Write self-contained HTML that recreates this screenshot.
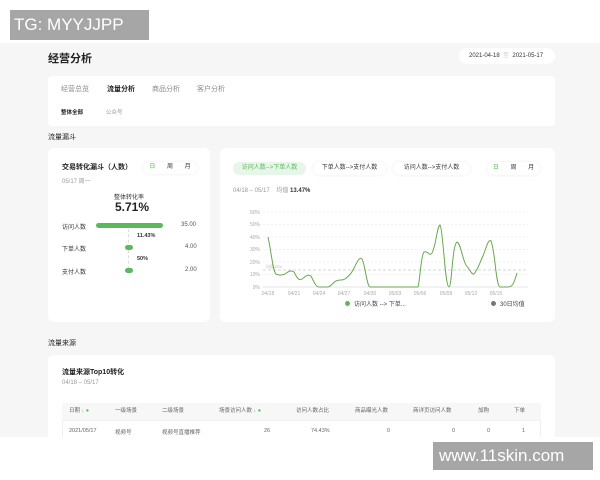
<!DOCTYPE html>
<html><head><meta charset="utf-8"><style>
*{margin:0;padding:0;box-sizing:border-box}
body{width:600px;height:480px;background:#fff;font-family:"Liberation Sans","Noto Sans CJK SC",sans-serif;position:relative;overflow:hidden;color:#333}
.a{position:absolute;white-space:nowrap}
.card{position:absolute;background:#fff;border-radius:6px}
.pill{position:absolute;border-radius:10px;background:#fff;box-shadow:0 0 3px rgba(0,0,0,.08);font-size:6px;color:#333;text-align:center;line-height:11px}
.s{font-size:6px;color:#999}
</style></head><body>
<div class="a" style="left:0;top:43px;width:600px;height:394px;background:#f6f6f6"></div>
<div class="a" style="left:10px;top:10px;width:139px;height:30px;background:#a6a6a6;color:#fff;font-size:17px;line-height:30px;padding-left:4px">TG: MYYJJPP</div>

<div class="a" style="left:48px;top:50px;font-size:11px;font-weight:bold;color:#222">经营分析</div>
<div class="a" style="left:459px;top:48px;width:96px;height:16px;background:#fff;border-radius:8px;font-size:6px;line-height:16px;color:#333;padding-left:10px">2021-04-18 &nbsp;<span style="color:#ccc">至</span>&nbsp; 2021-05-17</div>

<div class="card" style="left:48px;top:76px;width:507px;height:50px;border-radius:4px"></div>
<div class="a" style="left:61px;top:84px;font-size:7px;color:#888">经营总览</div>
<div class="a" style="left:107px;top:84px;font-size:7px;color:#222;font-weight:bold">流量分析</div>
<div class="a" style="left:152px;top:84px;font-size:7px;color:#888">商品分析</div>
<div class="a" style="left:197px;top:84px;font-size:7px;color:#888">客户分析</div>
<div class="a" style="left:61px;top:108px;font-size:5.5px;color:#222;font-weight:bold">整体全部</div>
<div class="a" style="left:106px;top:108px;font-size:5.5px;color:#999">公众号</div>

<div class="a" style="left:48px;top:132px;font-size:7px;color:#222">流量漏斗</div>

<div class="card" style="left:48px;top:148px;width:162px;height:174px"></div>
<div class="a" style="left:62px;top:162px;font-size:7px;font-weight:bold;color:#222">交易转化漏斗（人数）</div>
<div class="pill" style="left:143px;top:162px;width:54px;height:12px;word-spacing:10px"><span style="color:#5cb85c">日</span> 周 月</div>
<div class="a s" style="left:62px;top:176px">05/17 周一</div>
<div class="a" style="left:114px;top:192px;font-size:6px;color:#333">整体转化率</div>
<div class="a" style="left:115px;top:200px;font-size:12px;font-weight:bold;color:#222">5.71%</div>
<div class="a" style="left:62px;top:222px;font-size:6px">访问人数</div>
<div class="a" style="left:96px;top:223px;width:67px;height:5px;background:#5cb85c;border-radius:3px"></div>
<div class="a" style="left:181px;top:222px;font-size:6px;color:#555">35.00</div>
<div class="a" style="left:128px;top:229px;width:0;height:40px;border-left:1px dashed #ddd"></div>
<div class="a" style="left:137px;top:233px;font-size:5.5px;font-weight:bold">11.43%</div>
<div class="a" style="left:62px;top:244px;font-size:6px">下单人数</div>
<div class="a" style="left:125px;top:245px;width:8px;height:5px;background:#5cb85c;border-radius:3px"></div>
<div class="a" style="left:185px;top:244px;font-size:6px;color:#555">4.00</div>
<div class="a" style="left:137px;top:256px;font-size:5.5px;font-weight:bold">50%</div>
<div class="a" style="left:62px;top:267px;font-size:6px">支付人数</div>
<div class="a" style="left:125px;top:268px;width:8px;height:5px;background:#5cb85c;border-radius:3px"></div>
<div class="a" style="left:185px;top:267px;font-size:6px;color:#555">2.00</div>

<div class="card" style="left:220px;top:148px;width:335px;height:174px"></div>
<div class="pill" style="left:233px;top:162px;width:73px;height:13px;line-height:13px;background:#e8f5e9;box-shadow:none;color:#5cb85c">访问人数-->下单人数</div>
<div class="pill" style="left:313px;top:162px;width:73px;height:13px;line-height:13px">下单人数-->支付人数</div>
<div class="pill" style="left:393px;top:162px;width:77px;height:13px;line-height:13px">访问人数-->支付人数</div>
<div class="pill" style="left:487px;top:162px;width:53px;height:13px;line-height:13px;word-spacing:10px"><span style="color:#5cb85c">日</span> 周 月</div>
<div class="a s" style="left:233px;top:185px">04/18 – 05/17 &nbsp;&nbsp; 均值 <b style="color:#333">13.47%</b></div>
<svg class="a" style="left:220px;top:200px" width="335" height="110" viewBox="220 200 335 110">
<g stroke="#e6e6e6" stroke-dasharray="2 2" stroke-width="0.6">
<line x1="263" x2="528" y1="212" y2="212"/><line x1="263" x2="528" y1="224.5" y2="224.5"/><line x1="263" x2="528" y1="237" y2="237"/><line x1="263" x2="528" y1="249.5" y2="249.5"/><line x1="263" x2="528" y1="262" y2="262"/><line x1="263" x2="528" y1="274.5" y2="274.5"/></g>
<line x1="263" x2="528" y1="287" y2="287" stroke="#ddd" stroke-width="0.8"/>
<line x1="263" x2="528" y1="270" y2="270" stroke="#aaa" stroke-dasharray="3 2" stroke-width="0.6"/>
<text x="266" y="268" font-size="4" fill="#bbb">均值13%</text>
<g font-size="5" fill="#aaa" text-anchor="end">
<text x="260" y="214">60%</text><text x="260" y="226">50%</text><text x="260" y="239">40%</text><text x="260" y="251">30%</text><text x="260" y="264">20%</text><text x="260" y="276">10%</text><text x="260" y="289">0%</text></g>
<g font-size="5" fill="#aaa" text-anchor="middle">
<text x="268" y="295">04/18</text><text x="294" y="295">04/21</text><text x="319" y="295">04/24</text><text x="344" y="295">04/27</text><text x="370" y="295">04/30</text><text x="395" y="295">05/03</text><text x="420" y="295">05/06</text><text x="446" y="295">05/09</text><text x="471" y="295">05/12</text><text x="496" y="295">05/15</text></g>
<path fill="none" stroke="#6aa84f" stroke-width="1" stroke-linejoin="round" d="M268,237 C271,250 273,272 276,274 C280,276 282,275 285,274 C289,271 291,270 294,272 C297,278 299,281 302,279 C306,276 308,274 311,276 C314,282 316,287 319,287 L328,287 C332,286 333,282 336,281 C340,279 342,281 345,279 C349,276 351,274 353,270 C357,262 360,256 362,259 C365,264 367,287 370,287 L418,287 C420,280 421,255 424,252 C428,250 429,257 432,253 C436,246 437,226 440,225 C443,228 445,287 449,287 C452,287 452,245 457,242 C461,244 462,258 466,265 C470,270 472,275 474,274 C478,269 479,265 482,258 C486,250 488,238 491,241 C495,250 496,287 500,287 L508,287 C512,287 514,284 517,273"/>
</svg>
<div class="a" style="left:345px;top:301px;width:5px;height:5px;border-radius:50%;background:#5cb85c"></div>
<div class="a" style="left:354px;top:299px;font-size:6px;color:#444">访问人数 --> 下单...</div>
<div class="a" style="left:491px;top:301px;width:5px;height:5px;border-radius:50%;background:#777"></div>
<div class="a" style="left:500px;top:299px;font-size:6px;color:#444">30日均值</div>

<div class="a" style="left:48px;top:338px;font-size:7px;color:#222">流量来源</div>
<div class="card" style="left:48px;top:355px;width:507px;height:82px;border-radius:6px 6px 0 0"></div>
<div class="a" style="left:62px;top:367px;font-size:7px;font-weight:bold;color:#222">流量来源Top10转化</div>
<div class="a s" style="left:62px;top:380px">04/18 – 05/17</div>
<div class="a" style="left:62px;top:403px;width:479px;height:17px;background:#f7f7f7"></div>
<div class="a" style="left:62px;top:420px;width:479px;height:17px;border:1px solid #f0f0f0;border-bottom:none"></div>
<div class="a" style="left:0;top:404px;font-size:5.5px;color:#666;line-height:15px;width:600px">
<span class="a" style="left:69px">日期 <span style="color:#5cb85c">↓ ●</span></span>
<span class="a" style="left:115px">一级场景</span>
<span class="a" style="left:162px">二级场景</span>
<span class="a" style="left:219px">场景访问人数 <span style="color:#5cb85c">↓ ●</span></span>
<span class="a" style="left:296px">访问人数占比</span>
<span class="a" style="left:355px">商品曝光人数</span>
<span class="a" style="left:413px">商详页访问人数</span>
<span class="a" style="left:478px">加购</span>
<span class="a" style="left:514px">下单</span></div>
<div class="a" style="left:0;top:428px;font-size:5.5px;color:#666;width:600px">
<span class="a" style="left:69px">2021/05/17</span>
<span class="a" style="left:115px">视频号</span>
<span class="a" style="left:162px">视频号直播推荐</span>
<span class="a" style="left:264px">26</span>
<span class="a" style="left:311px">74.43%</span>
<span class="a" style="left:387px">0</span>
<span class="a" style="left:452px">0</span>
<span class="a" style="left:487px">0</span>
<span class="a" style="left:522px">1</span></div>
<div class="a" style="left:0;top:437px;width:600px;height:43px;background:#fff"></div>
<div class="a" style="left:433px;top:442px;width:160px;height:28px;background:#a6a6a6;color:#fff;font-size:17px;line-height:28px;padding-left:6px">www.11skin.com</div>
</body></html>
